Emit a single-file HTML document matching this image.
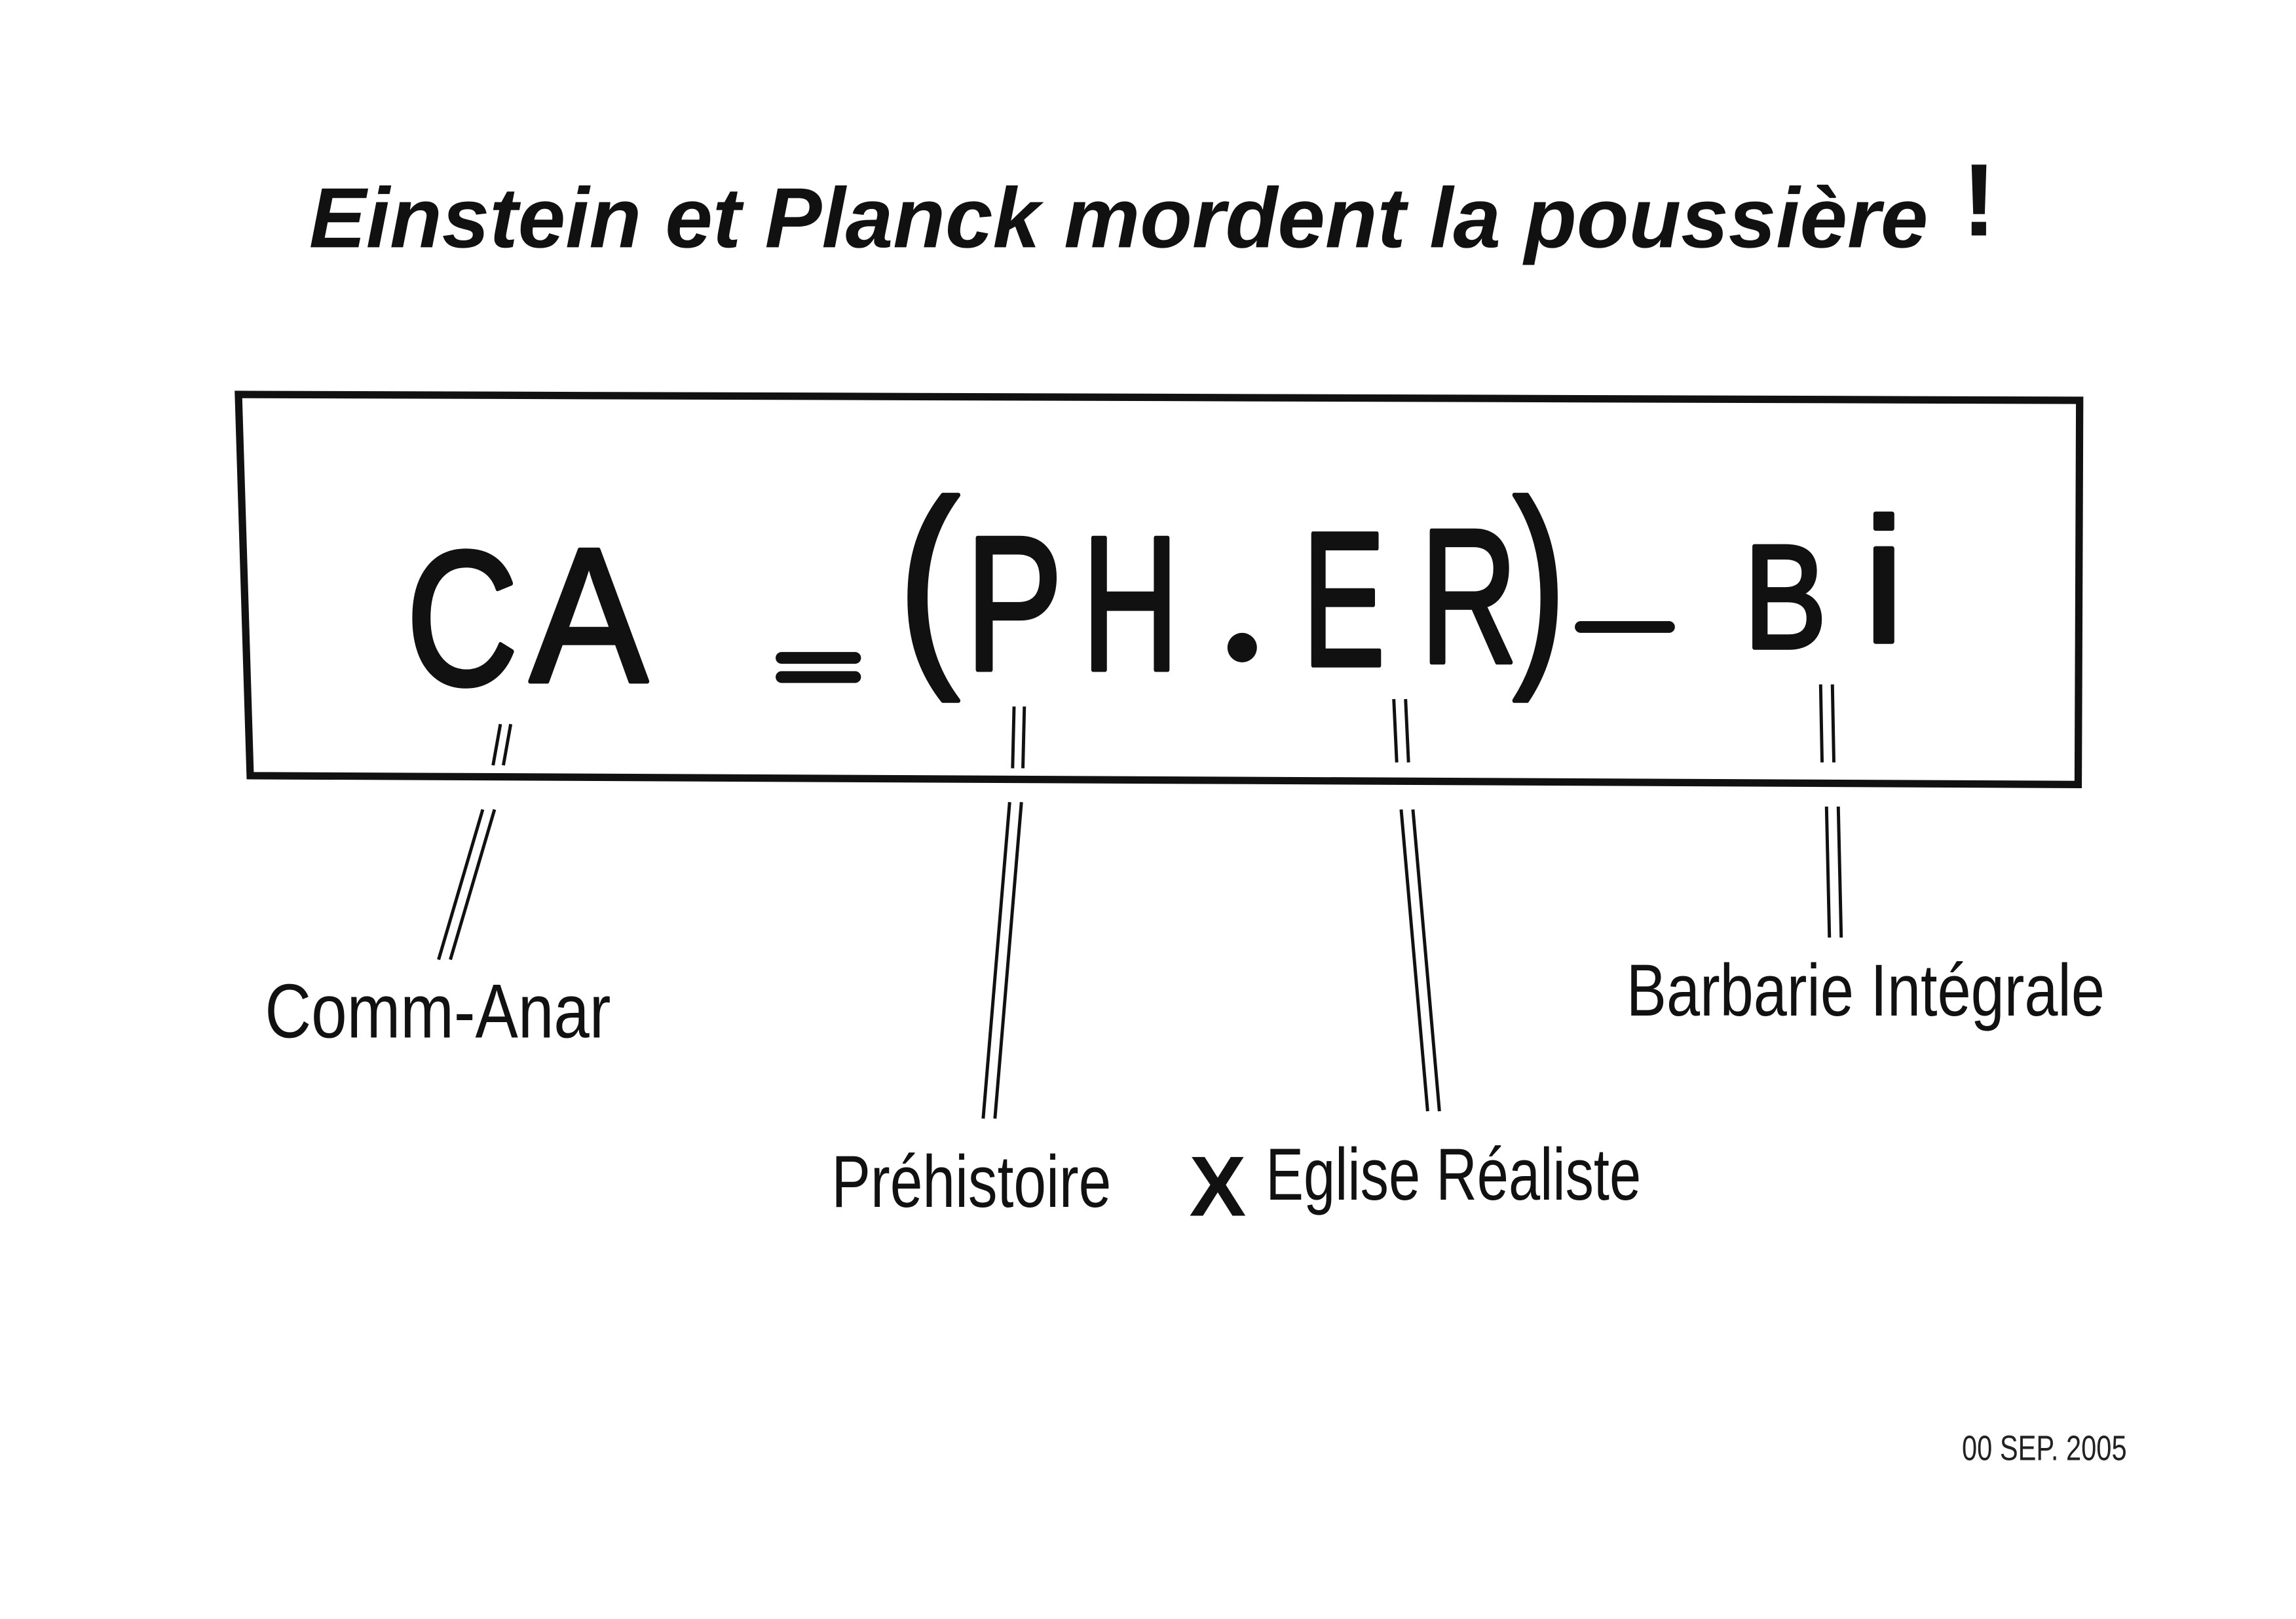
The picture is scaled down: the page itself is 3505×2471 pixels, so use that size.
<!DOCTYPE html>
<html><head><meta charset="utf-8"><style>
html,body{margin:0;padding:0;background:#fff;}
svg{display:block}
</style></head><body>
<svg width="3505" height="2471" viewBox="0 0 1560 1100" preserveAspectRatio="none" xmlns="http://www.w3.org/2000/svg">
<rect width="1560" height="1100" fill="#fff"/>
<text x="210" y="168" font-family="Liberation Sans, sans-serif" font-weight="bold" font-style="italic" font-size="58" fill="#111" textLength="1100" lengthAdjust="spacingAndGlyphs">Einstein et Planck mordent la poussière</text>
<text x="1333" y="160" font-family="Liberation Sans, sans-serif" font-weight="bold" font-size="70" fill="#111">!</text>
<path d="M162 268 L1413 272 L1412 533 L170 527 Z" fill="none" stroke="#111" stroke-width="5"/>
<g font-family="Liberation Sans, sans-serif" font-size="130" fill="#111" stroke="#111" stroke-width="3" stroke-linejoin="round">
<text x="276" y="465" textLength="76" lengthAdjust="spacingAndGlyphs">C</text>
<text x="360" y="463" textLength="80" lengthAdjust="spacingAndGlyphs">A</text>
<text x="610" y="445" font-size="150" textLength="42" lengthAdjust="spacingAndGlyphs">(</text>
<text x="656" y="455" textLength="66" lengthAdjust="spacingAndGlyphs">P</text>
<text x="735" y="455" textLength="66" lengthAdjust="spacingAndGlyphs">H</text>
<text x="885" y="452" textLength="56" lengthAdjust="spacingAndGlyphs">E</text>
<text x="965" y="450" textLength="66" lengthAdjust="spacingAndGlyphs">R</text>
<text x="1028" y="445" font-size="150" textLength="36" lengthAdjust="spacingAndGlyphs">)</text>
<text x="1185" y="440" font-size="100" textLength="56" lengthAdjust="spacingAndGlyphs">B</text>
<text x="1266" y="436" font-size="120" textLength="28" lengthAdjust="spacingAndGlyphs">i</text>
</g>
<rect x="527" y="443" width="58" height="8" rx="4" fill="#111"/>
<rect x="527" y="456" width="58" height="8" rx="4" fill="#111"/>
<circle cx="844" cy="440" r="10" fill="#111"/>
<rect x="1070" y="422" width="68" height="8" rx="4" fill="#111"/>
<g stroke="#111" stroke-width="2.2" fill="none">
<line x1="340" y1="492" x2="335" y2="520"/><line x1="347" y1="492" x2="342" y2="520"/>
<line x1="328" y1="550" x2="298" y2="652"/><line x1="336" y1="550" x2="306" y2="652"/>
<line x1="689" y1="480" x2="688" y2="522"/><line x1="696" y1="480" x2="695" y2="522"/>
<line x1="686" y1="545" x2="668" y2="760"/><line x1="694" y1="545" x2="676" y2="760"/>
<line x1="947" y1="475" x2="949" y2="518"/><line x1="955" y1="475" x2="957" y2="518"/>
<line x1="952" y1="550" x2="970" y2="755"/><line x1="960" y1="550" x2="978" y2="755"/>
<line x1="1237" y1="465" x2="1238" y2="518"/><line x1="1245" y1="465" x2="1246" y2="518"/>
<line x1="1241" y1="548" x2="1243" y2="637"/><line x1="1249" y1="548" x2="1251" y2="637"/>
</g>
<g font-family="Liberation Sans, sans-serif" fill="#111">
<text x="180" y="705" font-size="52" textLength="235" lengthAdjust="spacingAndGlyphs">Comm-Anar</text>
<text x="565" y="820" font-size="50" textLength="190" lengthAdjust="spacingAndGlyphs">Préhistoire</text>
<text x="860" y="815" font-size="50" textLength="255" lengthAdjust="spacingAndGlyphs">Eglise Réaliste</text>
<text x="1105" y="690" font-size="50" textLength="325" lengthAdjust="spacingAndGlyphs">Barbarie Intégrale</text>
</g>
<text x="808" y="826" font-family="Liberation Sans, sans-serif" font-weight="bold" font-size="58" fill="#111">X</text>
<text x="1333" y="992" font-family="Liberation Sans, sans-serif" font-size="24" fill="#222" textLength="112" lengthAdjust="spacingAndGlyphs">00 SEP. 2005</text>
</svg>
</body></html>
